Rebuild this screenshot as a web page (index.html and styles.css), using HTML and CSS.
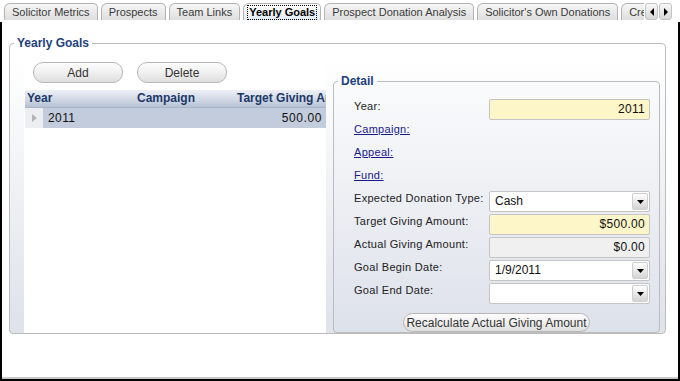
FILE: index.html
```html
<!DOCTYPE html>
<html lang="en">
<head>
    <meta charset="UTF-8">
    <title>Yearly Goals</title>
    <link rel="stylesheet" href="styles.css">
</head>
<body>
    <div class="app">
        <div class="tabstrip">
            <div class="tabs">
                <div class="tab">Solicitor Metrics</div>
                <div class="tab">Prospects</div>
                <div class="tab">Team Links</div>
                <div class="tab active"><span class="focus">Yearly Goals</span></div>
                <div class="tab">Prospect Donation Analysis</div>
                <div class="tab">Solicitor's Own Donations</div>
                <div class="tab">Credits</div>
            </div>
            <div class="scroller">
                <span class="arrow">
                    <svg width="6" height="8" viewBox="0 0 6 8"><path d="M5 0 L1 4 L5 8 Z" fill="#000"/></svg>
                </span>
                <span class="arrow">
                    <svg width="6" height="8" viewBox="0 0 6 8"><path d="M1 0 L5 4 L1 8 Z" fill="#000"/></svg>
                </span>
            </div>
        </div>

        <div class="frame">
            <fieldset class="group">
                <legend>Yearly Goals</legend>
                <div class="split">
                    <div class="list-pane">
                        <div class="toolbar">
                            <button class="pill">Add</button>
                            <button class="pill">Delete</button>
                        </div>
                        <div class="grid">
                            <div class="grid-head">
                                <span class="col-year">Year</span>
                                <span class="col-campaign">Campaign</span>
                                <span class="col-target">Target Giving Amount</span>
                            </div>
                            <div class="grid-row selected">
                                <span class="row-marker">
                                    <svg width="5" height="8" viewBox="0 0 5 8"><path d="M0 0 L5 4 L0 8 Z" fill="#b4b4b4"/></svg>
                                </span>
                                <span class="cell-year">2011</span>
                                <span class="cell-amount">500.00</span>
                            </div>
                        </div>
                    </div>

                    <fieldset class="detail">
                        <legend>Detail</legend>
                        <div class="form">
                            <label>Year:</label>
                            <div class="field required num">2011</div>

                            <a class="link" href="#">Campaign:</a>
                            <div></div>

                            <a class="link" href="#">Appeal:</a>
                            <div></div>

                            <a class="link" href="#">Fund:</a>
                            <div></div>

                            <label>Expected Donation Type:</label>
                            <div class="field combo"><span>Cash</span><span class="drop"><svg width="7" height="4" viewBox="0 0 7 4"><path d="M0 0 H7 L3.5 4 Z" fill="#000"/></svg></span></div>

                            <label>Target Giving Amount:</label>
                            <div class="field required num">$500.00</div>

                            <label>Actual Giving Amount:</label>
                            <div class="field readonly num">$0.00</div>

                            <label>Goal Begin Date:</label>
                            <div class="field combo"><span>1/9/2011</span><span class="drop"><svg width="7" height="4" viewBox="0 0 7 4"><path d="M0 0 H7 L3.5 4 Z" fill="#000"/></svg></span></div>

                            <label>Goal End Date:</label>
                            <div class="field combo"><span></span><span class="drop"><svg width="7" height="4" viewBox="0 0 7 4"><path d="M0 0 H7 L3.5 4 Z" fill="#000"/></svg></span></div>
                        </div>
                        <div class="actions">
                            <button class="pill wide">Recalculate Actual Giving Amount</button>
                        </div>
                    </fieldset>
                </div>
            </fieldset>
        </div>
    </div>
</body>
</html>
```

FILE: styles.css
```css
body {
    margin: 0;
    font-family: "Liberation Sans", Arial, sans-serif;
    font-size: 11px;
    color: #222;
    background: #fff;
}
.app {
    width: 680px;
    height: 381px;
    overflow: hidden;
}

/* tab strip */
.tabstrip {
    height: 22px;
    display: flex;
    align-items: flex-start;
    padding: 3px 7px 0 4px;
    box-sizing: border-box;
}
.tabs {
    display: flex;
    gap: 3px;
    width: 640px;
    overflow: hidden;
}
.tab {
    flex: none;
    height: 17px;
    line-height: 16px;
    padding: 0 7px;
    box-sizing: border-box;
    border: 1px solid #b4b4b4;
    border-bottom: none;
    border-radius: 6px 5px 0 0;
    background: linear-gradient(#f6f6f6, #dedede);
    color: #3a3a3a;
    white-space: nowrap;
}
.tab.active {
    padding: 0 3px;
    background: linear-gradient(#ffffff, #e4eaf3);
    color: #000;
    font-weight: bold;
}
.focus {
    display: inline-block;
    line-height: 13px;
    padding: 0 1px;
    border: 1px dotted #000;
}
.scroller {
    display: flex;
    gap: 1px;
    margin-left: 1px;
}
.arrow {
    width: 13px;
    height: 17px;
    display: flex;
    align-items: center;
    justify-content: center;
    box-sizing: border-box;
    border: 1px solid #c4c4c4;
    border-radius: 3px;
    background: linear-gradient(#f8f8f8, #d8d8d8);
}

/* main frame */
.frame {
    height: 359px;
    box-sizing: border-box;
    border: 2px solid #000;
    border-top: none;
    box-shadow: inset 0 -3px 0 -1px #c8c8c8;
    padding-top: 14px;
}
fieldset {
    margin: 0;
    min-width: 0;
}
legend {
    font-size: 12px;
    font-weight: bold;
    color: #1e3f7c;
    line-height: 14px;
    padding: 0 3px;
    margin-left: 4px;
}
.group {
    width: 657px;
    margin-left: 7px;
    box-sizing: border-box;
    border: 1px solid #bcbcbc;
    border-radius: 4px;
    padding: 7px 5px 0 0;
    background: linear-gradient(#ffffff 5%, #dfe3eb 95%);
}
.split {
    display: flex;
    gap: 7px;
    height: 276px;
    padding-left: 14px;
}

/* list side */
.list-pane {
    width: 302px;
    flex: none;
    background: #fff;
}
.toolbar {
    display: flex;
    gap: 14px;
    padding: 5px 0 0 9px;
    height: 33px;
    box-sizing: border-box;
}
.pill {
    width: 90px;
    height: 21px;
    border: 1px solid #b8b8b8;
    border-radius: 10px;
    background: linear-gradient(#fdfdfd, #f0f0f0 50%, #dedede);
    font-family: "Liberation Sans", Arial, sans-serif;
    font-size: 12px;
    color: #333;
    padding: 0;
}
.grid-head {
    display: flex;
    height: 17px;
    line-height: 16px;
    margin-left: 1px;
    background: linear-gradient(#edf0f5, #d2d9e5 55%, #b6c2d4);
    border-bottom: 1px solid #a9b6ca;
    font-size: 12px;
    font-weight: bold;
    color: #1c386a;
    white-space: nowrap;
    overflow: hidden;
}
.col-year {
    width: 110px;
    padding-left: 2px;
    flex: none;
}
.col-campaign {
    width: 100px;
    flex: none;
}
.col-target {
    flex: none;
}
.grid-row {
    display: flex;
    height: 20px;
    line-height: 20px;
    margin-left: 1px;
    font-size: 12px;
    color: #111;
}
.row-marker {
    width: 18px;
    flex: none;
    display: flex;
    align-items: center;
    justify-content: center;
    background: #eceef2;
}
.grid-row.selected .cell-year,
.grid-row.selected .cell-amount {
    background: #c3ccdc;
}
.cell-year {
    width: 90px;
    padding-left: 5px;
    letter-spacing: 0.4px;
}
.cell-amount {
    flex: 1;
    text-align: right;
    padding-right: 4px;
    letter-spacing: 0.6px;
}

/* detail side */
.detail {
    flex: 1;
    margin-top: 17px;
    border: 1px solid #bcbcbc;
    border-radius: 4px;
    padding: 10px 0 0 0;
    background: linear-gradient(#fafbfc, #dde1ea);
}
.form {
    display: grid;
    grid-template-columns: 135px 161px;
    grid-auto-rows: 23px;
    padding: 0 8px 0 20px;
}
.form label,
.form .link {
    font-size: 11px;
    line-height: 13px;
    padding-top: 2px;
    letter-spacing: 0.3px;
    color: #222;
}
.form .link {
    color: #1a1a8f;
    text-decoration: underline;
    justify-self: start;
}
.field {
    height: 21px;
    margin-top: 1px;
    box-sizing: border-box;
    border: 1px solid #c4c4c4;
    border-radius: 2px;
    background: #fff;
    font-size: 12px;
    line-height: 19px;
    color: #111;
}
.field.required {
    background: #fdf6c9;
}
.field.readonly {
    background: #f0f0f0;
}
.field.num {
    text-align: right;
    padding-right: 4px;
    letter-spacing: 0.3px;
}
.combo {
    display: flex;
    justify-content: space-between;
    padding-left: 5px;
}
.drop {
    width: 16px;
    height: 17px;
    margin: 1px 1px 0 0;
    box-sizing: border-box;
    border: 1px solid #cfcfcf;
    border-radius: 2px;
    background: linear-gradient(#ffffff, #d4d4d4);
    display: flex;
    align-items: center;
    justify-content: center;
}
.actions {
    display: flex;
    justify-content: center;
    padding-top: 8px;
}
.pill.wide {
    width: 187px;
    height: 19px;
    line-height: 16px;
}
```
